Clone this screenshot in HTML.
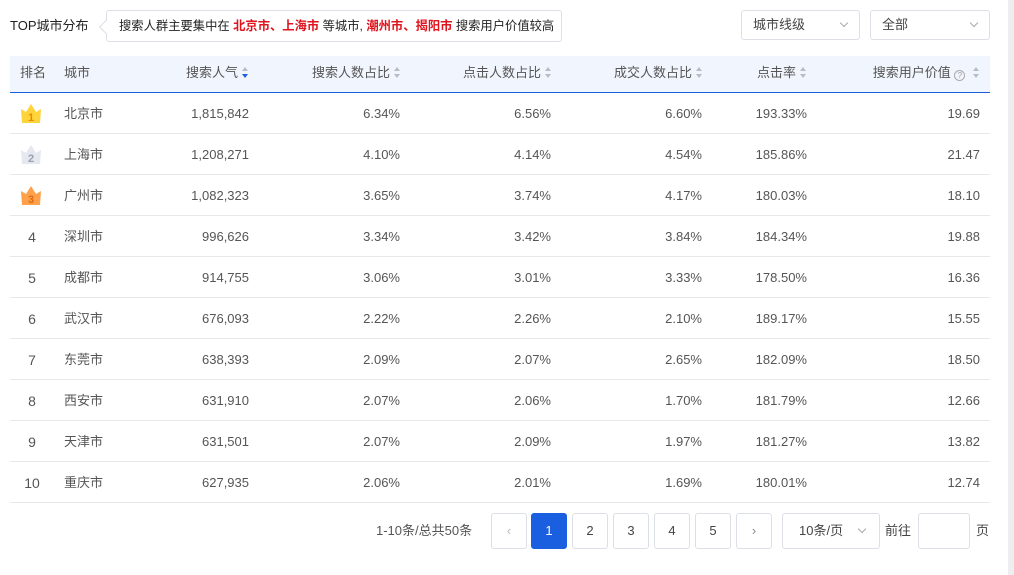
<!DOCTYPE html>
<html><head><meta charset="utf-8"><style>
*{margin:0;padding:0;box-sizing:border-box}
body{width:1014px;height:575px;background:#fff;font-family:"Liberation Sans","Noto Sans CJK SC",sans-serif;color:#333;position:relative;overflow:hidden;font-size:13px}
.abs{position:absolute;line-height:20px}
.sb{position:absolute;right:0;top:0;width:6px;height:575px;background:#eeeef0}
.title{left:10px;top:16px;font-size:13px;color:#222}
.callout{left:106px;top:10px;width:456px;height:32px;border:1px solid #dcdfe6;border-radius:3px;font-size:12.3px;line-height:30px;padding-left:12px;color:#222;white-space:nowrap}
.callout:before{content:"";position:absolute;left:-6px;top:11px;width:9px;height:9px;background:#fff;border-left:1px solid #dcdfe6;border-bottom:1px solid #dcdfe6;transform:rotate(45deg)}
.callout b{color:#e0141e;font-weight:bold}
.sel{top:10px;height:30px;border:1px solid #dcdfe6;border-radius:3px;font-size:13px;line-height:28px;padding-left:11px;color:#444}
.sel i{position:absolute;right:12px;top:9px;width:6px;height:6px;border-right:1px solid #aaa;border-bottom:1px solid #aaa;transform:rotate(45deg)}
.hdr{left:10px;top:56px;width:980px;height:37px;background:#f1f5fd;border-bottom:1.5px solid #1a5fe0}
.c{position:absolute;font-size:13px;white-space:nowrap;line-height:20px;height:20px}
.r{text-align:right}
.hdr .c{top:7px;color:#555}
.sort{display:inline-block;width:7px;height:11px;vertical-align:-1px;margin-left:4px;position:relative}
.sort:before,.sort:after{content:"";position:absolute;left:0;border-left:3.5px solid transparent;border-right:3.5px solid transparent}
.sort:before{top:0;border-bottom:4px solid #b8bcc4}
.sort:after{bottom:0;border-top:4px solid #b8bcc4}
.sort.d:after{border-top-color:#1a5fe0}
.row{position:absolute;left:10px;width:980px;height:41px;border-bottom:1px solid #e8e8e8}
.row .c{top:11px;color:#555}
.rk{left:10px;width:24px;text-align:center;color:#aaa;font-size:14px}
.pg{top:513px;height:36px;border:1px solid #dcdfe6;border-radius:3px;text-align:center;line-height:34px;font-size:13px;color:#444}
</style></head><body>
<div class="sb"></div>
<div class="abs title">TOP城市分布</div>
<div class="abs callout">搜索人群主要集中在 <b>北京市、上海市</b> 等城市, <b>潮州市、揭阳市</b> 搜索用户价值较高</div>
<div class="abs sel" style="left:741px;width:119px">城市线级<i></i></div>
<div class="abs sel" style="left:870px;width:120px">全部<i></i></div>

<div class="abs hdr">
<div class="c" style="left:10px">排名</div>
<div class="c" style="left:54px">城市</div>
<div class="c r" style="right:741px">搜索人气<span class="sort d"></span></div>
<div class="c r" style="right:589px">搜索人数占比<span class="sort"></span></div>
<div class="c r" style="right:438px">点击人数占比<span class="sort"></span></div>
<div class="c r" style="right:287px">成交人数占比<span class="sort"></span></div>
<div class="c r" style="right:183px">点击率<span class="sort"></span></div>
<div class="c r" style="right:10px">搜索用户价值 <span style="display:inline-block;width:11px;height:11px;border:1px solid #aaa;border-radius:50%;font-size:8px;line-height:9px;text-align:center;color:#999;vertical-align:-1px">?</span> <span class="sort"></span></div>
</div>

<div id="rows"></div>
<script>
var d=[["北京市","1,815,842","6.34%","6.56%","6.60%","193.33%","19.69"],["上海市","1,208,271","4.10%","4.14%","4.54%","185.86%","21.47"],["广州市","1,082,323","3.65%","3.74%","4.17%","180.03%","18.10"],["深圳市","996,626","3.34%","3.42%","3.84%","184.34%","19.88"],["成都市","914,755","3.06%","3.01%","3.33%","178.50%","16.36"],["武汉市","676,093","2.22%","2.26%","2.10%","189.17%","15.55"],["东莞市","638,393","2.09%","2.07%","2.65%","182.09%","18.50"],["西安市","631,910","2.07%","2.06%","1.70%","181.79%","12.66"],["天津市","631,501","2.07%","2.09%","1.97%","181.27%","13.82"],["重庆市","627,935","2.06%","2.01%","1.69%","180.01%","12.74"]];
var cols=["#ffd43a","#e6e8ef","#ffa14a"],nc=["#e88a00","#9a9fb0","#e06a10"];
var h="";
d.forEach(function(r,i){
 var rk=i<3?'<svg style="position:absolute;left:10px;top:10px" width="22" height="21" viewBox="0 0 22 21"><path d="M1 6 L6 9 L11 1 L16 9 L21 6 L20 20 L2 20 Z" fill="'+cols[i]+'"/><text x="11" y="18" font-size="11" font-weight="bold" text-anchor="middle" fill="'+nc[i]+'" font-family="Liberation Sans">'+(i+1)+'</text></svg>':'<div class="c rk">'+(i+1)+'</div>';
 h+='<div class="row" style="top:'+(93+i*41)+'px">'+rk+'<div class="c" style="left:54px">'+r[0]+'</div><div class="c r" style="right:741px">'+r[1]+'</div><div class="c r" style="right:590px">'+r[2]+'</div><div class="c r" style="right:439px">'+r[3]+'</div><div class="c r" style="right:288px">'+r[4]+'</div><div class="c r" style="right:183px">'+r[5]+'</div><div class="c r" style="right:10px">'+r[6]+'</div></div>';
});
document.getElementById("rows").innerHTML=h;
</script>

<div class="abs" style="left:376px;top:521px;font-size:13px;color:#555">1-10条/总共50条</div>
<div class="abs pg" style="left:491px;width:36px;color:#bbb">‹</div>
<div class="abs pg" style="left:531px;width:36px;background:#1a5fe0;border-color:#1a5fe0;color:#fff">1</div>
<div class="abs pg" style="left:572px;width:36px">2</div>
<div class="abs pg" style="left:613px;width:36px">3</div>
<div class="abs pg" style="left:654px;width:36px">4</div>
<div class="abs pg" style="left:695px;width:36px">5</div>
<div class="abs pg" style="left:736px;width:36px;color:#888">›</div>
<div class="abs pg" style="left:782px;width:98px;text-align:left;padding-left:16px">10条/页<i style="position:absolute;right:14px;top:12px;width:6px;height:6px;border-right:1px solid #aaa;border-bottom:1px solid #aaa;transform:rotate(45deg)"></i></div>
<div class="abs" style="left:885px;top:521px;color:#444">前往</div>
<div class="abs pg" style="left:918px;width:52px"></div>
<div class="abs" style="left:976px;top:521px;color:#444">页</div>
</body></html>
